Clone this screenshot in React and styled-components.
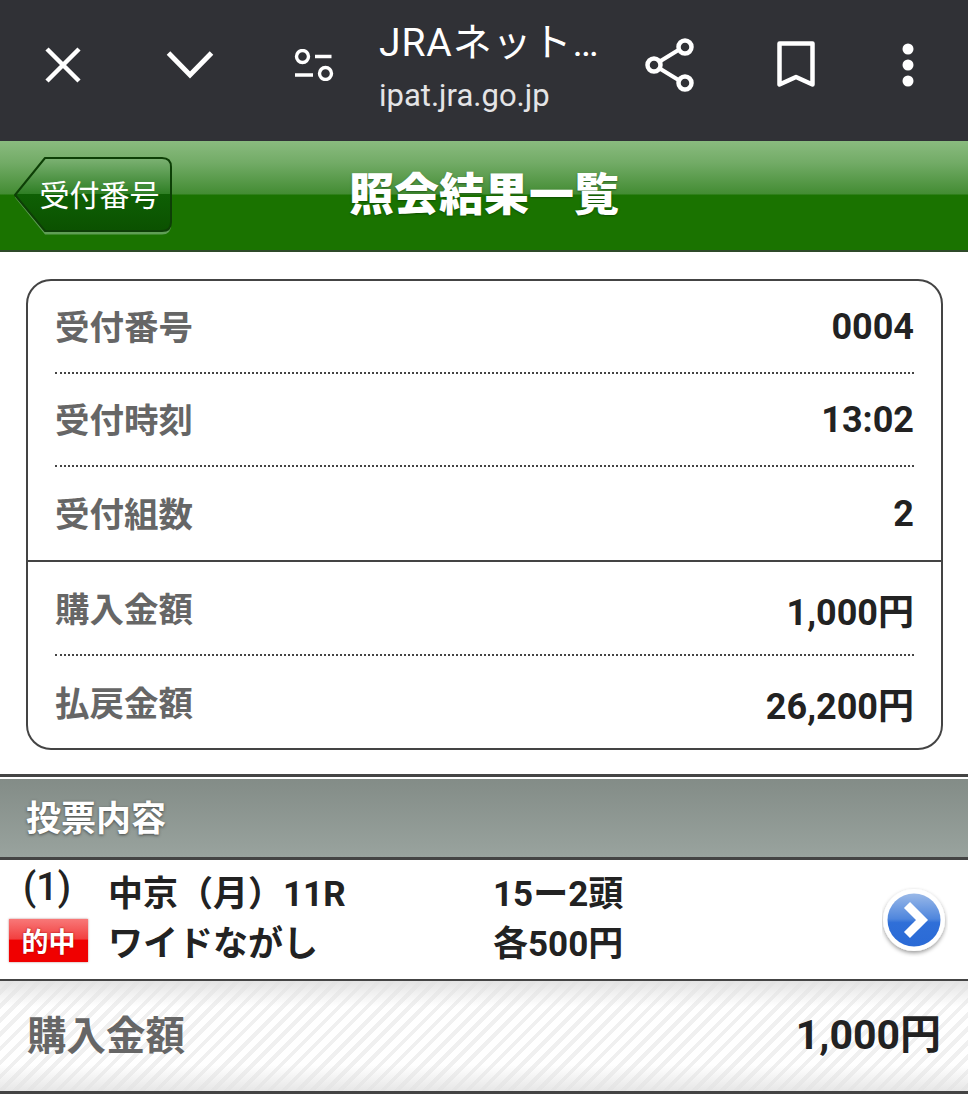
import React from 'react';
import styled, { createGlobalStyle } from 'styled-components';

const CJK = `"Roboto", "Noto Sans CJK JP", sans-serif`;

const GlobalStyle = createGlobalStyle`
  html, body { margin: 0; padding: 0; background: #fff; }
  body { font-family: ${CJK}; width: 968px; height: 1108px; overflow: hidden; }
  * { box-sizing: border-box; }
`;

const Page = styled.div`
  width: 968px;
  height: 1108px;
  background: #fff;
`;

/* browser custom tab bar */
const TabBar = styled.div`
  height: 141px;
  padding-bottom: 11px;
  background: #303136;
  display: flex;
  align-items: center;
  color: #fff;
`;

const TabIcon = styled.div`
  flex: 0 0 ${(p) => p.$w}px;
  display: flex;
  align-items: center;
  justify-content: center;
`;

const TabTitle = styled.div`
  flex: 0 0 239px;
  align-self: flex-start;
  padding: 18px 0 0 5px;
  display: flex;
  flex-direction: column;
`;

const TabName = styled.div`
  font-size: 39px;
  line-height: 50px;
  white-space: nowrap;
  letter-spacing: 0.9px;
  color: #fff;
`;

const TabUrl = styled.div`
  font-size: 31px;
  line-height: 40px;
  color: #e4e4e6;
  margin-top: 8px;
`;

/* green page header */
const Header = styled.div`
  height: 111px;
  display: grid;
  grid-template-columns: 1fr auto 1fr;
  align-items: center;
  padding: 3px 13px 0 13px;
  border-bottom: 2px solid #2f4a2a;
  background: linear-gradient(to bottom, #8abb7f 0, #72ab66 22px, #438c33 53px, #1a7300 54px, #1a7300 100%);
`;

const BackButton = styled.div`
  position: relative;
  width: 160px;
  height: 80px;
  display: flex;
  align-items: center;
  justify-content: center;
  padding: 0 0 7px 13px;
  margin-top: -2px;
  color: #fff;
  font-size: 30px;
  font-weight: 400;
`;

const BackShape = styled.svg`
  position: absolute;
  left: 0;
  top: 0;
`;

const BackLabel = styled.span`
  position: relative;
`;

const Title = styled.h1`
  margin: 0;
  font-size: 45px;
  line-height: 60px;
  font-weight: 900;
  color: #fff;
  text-shadow: 0 1px 2px rgba(0, 50, 0, 0.55);
  position: relative;
  top: -1px;
`;

/* summary card */
const Card = styled.div`
  margin: 27px 25px 0 26px;
  height: 471px;
  border: 2px solid #444;
  border-radius: 25px;
  padding: 0 27px;
  display: flex;
  flex-direction: column;
`;

const CardRow = styled.div`
  flex: 0 0 ${(p) => p.$h}px;
  margin: 0 ${(p) => (p.$solid ? -27 : 0)}px;
  padding: 0 ${(p) => (p.$solid ? 27 : 0)}px 5px;
  display: flex;
  align-items: center;
  justify-content: space-between;
  border-bottom: ${(p) => (p.$last ? 'none' : p.$solid ? '2px solid #444' : '2px dotted #444')};
`;

const RowLabel = styled.span`
  padding-top: 2px;
  font-size: 34.5px;
  font-weight: 700;
  color: #666;
`;

const RowValue = styled.span`
  padding-top: 6px;
  font-size: 36px;
  font-weight: 700;
  color: #222;
`;

/* ticket section */
const Section = styled.div`
  margin-top: 24px;
  border-top: 3px solid #444;
  padding-top: 2px;
`;

const SectionHead = styled.div`
  height: 81px;
  padding: 0 0 5px 26px;
  display: flex;
  align-items: center;
  border-bottom: 3px solid #444;
  background: linear-gradient(to bottom, #838c87, #99a39e);
  color: #fff;
  font-size: 35px;
  font-weight: 700;
  text-shadow: 0 1px 3px rgba(40, 40, 40, 0.7);
`;

const Ticket = styled.div`
  height: 121px;
  border-bottom: 2px solid #444;
  display: grid;
  grid-template-columns: 108px 385px 1fr 85px;
  grid-template-rows: 60px 1fr;
  align-items: center;
  font-size: 35px;
  font-weight: 700;
  color: #222;
`;

const TicketNo = styled.div`
  font-size: 38px;
  line-height: 40px;
  padding-left: 23px;
  margin-top: -6px;
  font-weight: 500;
`;

const TicketCell = styled.div`
  line-height: 44px;
  white-space: nowrap;
  margin-top: ${(p) => p.$top || 0}px;
`;

const HitBadge = styled.div`
  margin: -18px 0 0 9px;
  width: 79px;
  height: 43px;
  display: flex;
  align-items: center;
  justify-content: center;
  color: #fff;
  font-size: 27px;
  font-weight: 700;
  text-shadow: 0 0 2px #900;
  background: linear-gradient(to bottom, #f87878 0, #f24040 46%, #f00000 50%, #f00000 100%);
  box-shadow: 0 0 2px rgba(120, 0, 0, 0.5);
`;

const ArrowCell = styled.div`
  grid-column: 4;
  grid-row: 1 / span 2;
  display: flex;
  justify-content: flex-start;
  align-items: center;
  margin: 4px 0 0 -1px;
`;

const TotalBar = styled.div`
  height: 113px;
  padding: 0 27px 10px 27px;
  display: flex;
  align-items: center;
  justify-content: space-between;
  border-bottom: 3px solid #444;
  background:
    linear-gradient(to bottom, rgba(225, 225, 225, 0.9) 0, rgba(255, 255, 255, 0) 26px, rgba(255, 255, 255, 0) 84px, rgba(225, 225, 225, 0.8) 100%),
    repeating-linear-gradient(135deg, #fff 0, #fff 6px, #f0f0f0 6px, #f0f0f0 10px);
`;

const TotalLabel = styled.span`
  padding-top: 2px;
  font-size: 39.5px;
  font-weight: 700;
  color: #666;
`;

const TotalValue = styled.span`
  font-size: 41px;
  font-weight: 700;
  color: #222;
`;

const CloseIcon = () => (
  <svg width="38" height="38" viewBox="0 0 38 38">
    <path d="M3 3 L35 35 M35 3 L3 35" stroke="#fff" strokeWidth="4.5" fill="none" />
  </svg>
);

const ChevronIcon = () => (
  <svg width="48" height="30" viewBox="0 0 48 30">
    <path d="M2.5 3 L24 25 L45.5 3" stroke="#fff" strokeWidth="5" fill="none" />
  </svg>
);

const TuneIcon = () => (
  <svg width="40" height="32" viewBox="0 0 40 32">
    <circle cx="8.5" cy="7.5" r="6" stroke="#fff" strokeWidth="3.4" fill="none" />
    <path d="M21 7.5 H37.5 M1 26 H19" stroke="#fff" strokeWidth="3.6" fill="none" />
    <circle cx="31.5" cy="24.5" r="6" stroke="#fff" strokeWidth="3.4" fill="none" />
  </svg>
);

const ShareIcon = () => (
  <svg width="50" height="56" viewBox="0 0 50 56">
    <path d="M9 28 L40 9 M9 28 L40 47" stroke="#fff" strokeWidth="4" fill="none" />
    <circle cx="9" cy="28" r="6.5" stroke="#fff" strokeWidth="4.5" fill="#303136" />
    <circle cx="40" cy="10" r="6.5" stroke="#fff" strokeWidth="4.5" fill="#303136" />
    <circle cx="40" cy="46" r="6.5" stroke="#fff" strokeWidth="4.5" fill="#303136" />
  </svg>
);

const BookmarkIcon = () => (
  <svg width="38" height="48" viewBox="0 0 38 48">
    <path d="M2.5 2.5 H35.5 V43.5 L19 36 L2.5 43.5 Z" stroke="#fff" strokeWidth="4.5" strokeLinejoin="round" fill="none" />
  </svg>
);

const DotsIcon = () => (
  <svg width="12" height="44" viewBox="0 0 12 44">
    <circle cx="6" cy="6" r="5.5" fill="#fff" />
    <circle cx="6" cy="22" r="5.5" fill="#fff" />
    <circle cx="6" cy="38" r="5.5" fill="#fff" />
  </svg>
);

const BackPlate = () => (
  <BackShape width="160" height="80" viewBox="0 0 160 80">
    <defs>
      <linearGradient id="backFill" x1="0" y1="0" x2="0" y2="1">
        <stop offset="0" stopColor="#7db274" />
        <stop offset="0.49" stopColor="#2f7f25" />
        <stop offset="0.5" stopColor="#0e5f04" />
        <stop offset="1" stopColor="#0b5100" />
      </linearGradient>
    </defs>
    <path d="M32 3 H149 Q158 3 158 12 V68 Q158 77 149 77 H32 L2 40 Z" fill="#5f9e55" transform="translate(0 1.5)" />
    <path d="M32 2 H149 Q158 2 158 11 V66 Q158 75 149 75 H32 L2 39 Z" fill="url(#backFill)" stroke="#0d3f06" strokeWidth="2" strokeLinejoin="round" />
  </BackShape>
);

const ArrowBadge = () => (
  <svg width="66" height="70" viewBox="0 0 66 70">
    <defs>
      <linearGradient id="arrowFill" x1="0" y1="0" x2="0" y2="1">
        <stop offset="0" stopColor="#9ab9e8" />
        <stop offset="0.48" stopColor="#4f86dd" />
        <stop offset="0.55" stopColor="#2f6fd8" />
        <stop offset="1" stopColor="#2a6ad6" />
      </linearGradient>
      <filter id="arrowShadow" x="-20%" y="-20%" width="140%" height="140%">
        <feDropShadow dx="0" dy="2" stdDeviation="2" floodColor="#000" floodOpacity="0.4" />
      </filter>
    </defs>
    <circle cx="32" cy="33" r="31" fill="#fff" filter="url(#arrowShadow)" />
    <circle cx="32" cy="33" r="26.5" fill="url(#arrowFill)" />
    <path d="M25 18 L40 33 L25 48" stroke="#fff" strokeWidth="8.5" fill="none" />
  </svg>
);

export default function App() {
  return (
    <Page>
      <GlobalStyle />
      <TabBar>
        <TabIcon $w={126}><CloseIcon /></TabIcon>
        <TabIcon $w={128}><ChevronIcon /></TabIcon>
        <TabIcon $w={120}><TuneIcon /></TabIcon>
        <TabTitle>
          <TabName>JRAネット…</TabName>
          <TabUrl>ipat.jra.go.jp</TabUrl>
        </TabTitle>
        <TabIcon $w={114}><ShareIcon /></TabIcon>
        <TabIcon $w={138}><BookmarkIcon /></TabIcon>
        <TabIcon $w={86}><DotsIcon /></TabIcon>
      </TabBar>

      <Header>
        <BackButton>
          <BackPlate />
          <BackLabel>受付番号</BackLabel>
        </BackButton>
        <Title>照会結果一覧</Title>
        <div />
      </Header>

      <Card>
        <CardRow $h={93}><RowLabel>受付番号</RowLabel><RowValue>0004</RowValue></CardRow>
        <CardRow $h={93}><RowLabel>受付時刻</RowLabel><RowValue>13:02</RowValue></CardRow>
        <CardRow $h={95} $solid><RowLabel>受付組数</RowLabel><RowValue>2</RowValue></CardRow>
        <CardRow $h={94}><RowLabel>購入金額</RowLabel><RowValue>1,000円</RowValue></CardRow>
        <CardRow $h={92} $last><RowLabel>払戻金額</RowLabel><RowValue>26,200円</RowValue></CardRow>
      </Card>

      <Section>
        <SectionHead>投票内容</SectionHead>
        <Ticket>
          <TicketNo>(1)</TicketNo>
          <TicketCell $top={10}>中京（月）11R</TicketCell>
          <TicketCell $top={10}>15ー2頭</TicketCell>
          <ArrowCell><ArrowBadge /></ArrowCell>
          <HitBadge>的中</HitBadge>
          <TicketCell $top={-10}>ワイドながし</TicketCell>
          <TicketCell $top={-10}>各500円</TicketCell>
        </Ticket>
        <TotalBar>
          <TotalLabel>購入金額</TotalLabel>
          <TotalValue>1,000円</TotalValue>
        </TotalBar>
      </Section>
    </Page>
  );
}
